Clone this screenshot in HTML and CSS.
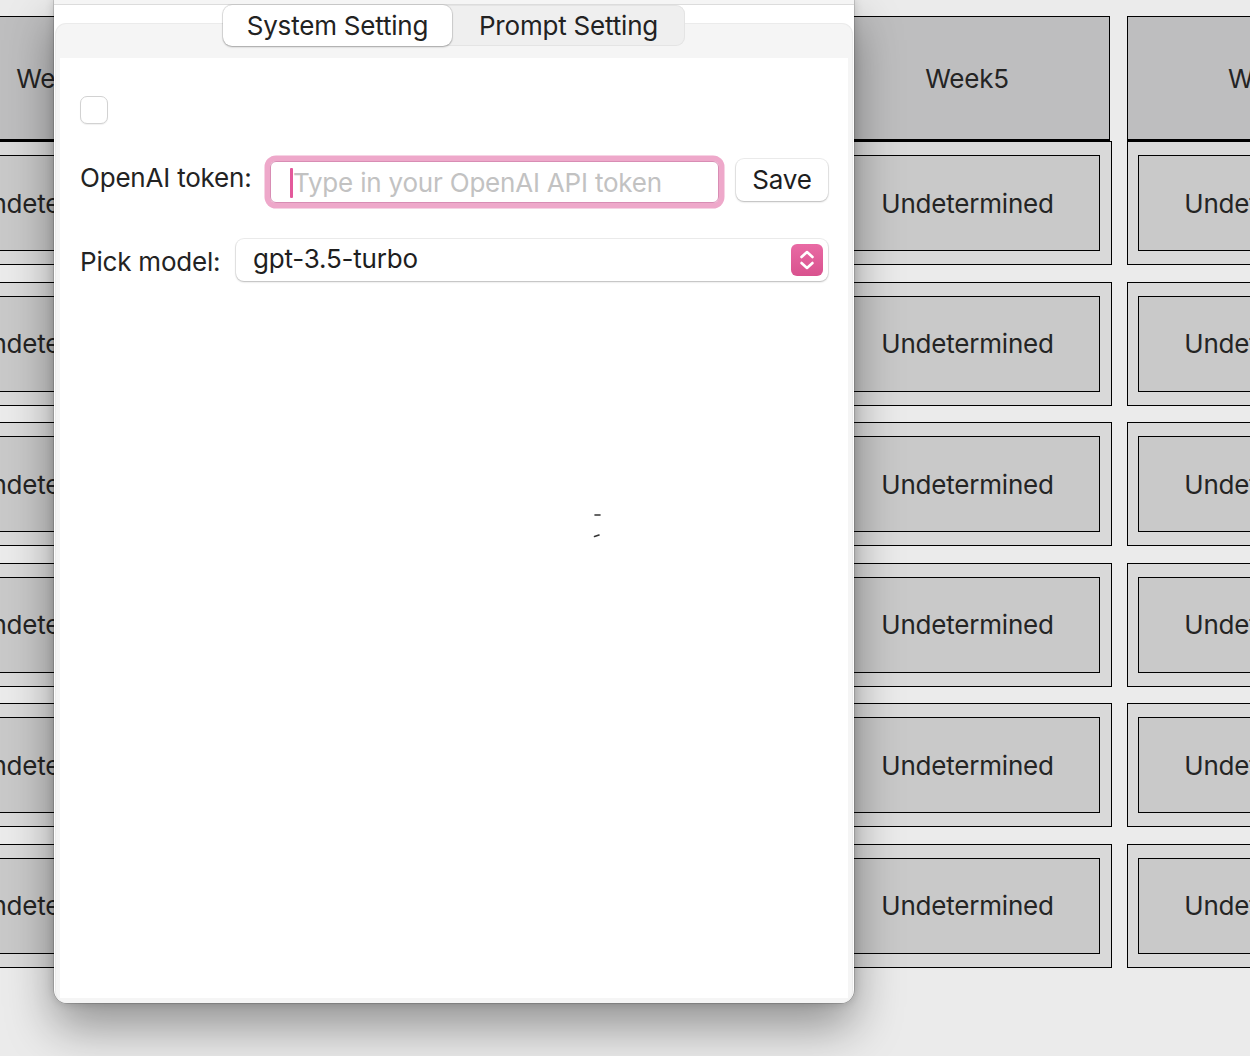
FILE: index.html
```html
<!DOCTYPE html>
<html>
<head>
<meta charset="utf-8">
<link rel="stylesheet" href="styles.css">
</head>
<body>
<div class="board">
  <div class="col">
    <div class="head">Week2</div>
    <div class="cell"><div class="inner">Undetermined</div></div>
    <div class="cell"><div class="inner">Undetermined</div></div>
    <div class="cell"><div class="inner">Undetermined</div></div>
    <div class="cell"><div class="inner">Undetermined</div></div>
    <div class="cell"><div class="inner">Undetermined</div></div>
    <div class="cell"><div class="inner">Undetermined</div></div>
  </div>
  <div class="col">
    <div class="head">Week3</div>
    <div class="cell"><div class="inner">Undetermined</div></div>
    <div class="cell"><div class="inner">Undetermined</div></div>
    <div class="cell"><div class="inner">Undetermined</div></div>
    <div class="cell"><div class="inner">Undetermined</div></div>
    <div class="cell"><div class="inner">Undetermined</div></div>
    <div class="cell"><div class="inner">Undetermined</div></div>
  </div>
  <div class="col">
    <div class="head">Week4</div>
    <div class="cell"><div class="inner">Undetermined</div></div>
    <div class="cell"><div class="inner">Undetermined</div></div>
    <div class="cell"><div class="inner">Undetermined</div></div>
    <div class="cell"><div class="inner">Undetermined</div></div>
    <div class="cell"><div class="inner">Undetermined</div></div>
    <div class="cell"><div class="inner">Undetermined</div></div>
  </div>
  <div class="col">
    <div class="head">Week5</div>
    <div class="cell"><div class="inner">Undetermined</div></div>
    <div class="cell"><div class="inner">Undetermined</div></div>
    <div class="cell"><div class="inner">Undetermined</div></div>
    <div class="cell"><div class="inner">Undetermined</div></div>
    <div class="cell"><div class="inner">Undetermined</div></div>
    <div class="cell"><div class="inner">Undetermined</div></div>
  </div>
  <div class="col">
    <div class="head">Week6</div>
    <div class="cell"><div class="inner">Undetermined</div></div>
    <div class="cell"><div class="inner">Undetermined</div></div>
    <div class="cell"><div class="inner">Undetermined</div></div>
    <div class="cell"><div class="inner">Undetermined</div></div>
    <div class="cell"><div class="inner">Undetermined</div></div>
    <div class="cell"><div class="inner">Undetermined</div></div>
  </div>
</div>

<div class="window">
  <div class="titlebar"></div>
  <div class="tabview">
    <div class="segmented">
      <div class="seg seg-active">System Setting</div>
      <div class="seg seg-second">Prompt Setting</div>
    </div>
    <div class="pane">
      <div class="checkbox"></div>
      <div class="row row-token">
        <span class="label label-token">OpenAI token:</span>
        <div class="field">
          <span class="caret"></span>
          <span class="placeholder">Type in your OpenAI API token</span>
        </div>
        <div class="button">Save</div>
      </div>
      <div class="row row-model">
        <span class="label label-model">Pick model:</span>
        <div class="select">
          <span class="select-value">gpt-3.5-turbo</span>
          <span class="stepper">
            <svg width="32" height="32" viewBox="0 0 32 32">
              <path d="M10.5 13 L16 8 L21.5 13" fill="none" stroke="#fff" stroke-width="2.6" stroke-linecap="round" stroke-linejoin="round"/>
              <path d="M10.5 19 L16 24 L21.5 19" fill="none" stroke="#fff" stroke-width="2.6" stroke-linecap="round" stroke-linejoin="round"/>
            </svg>
          </span>
        </div>
      </div>
      <div class="spinner">
        <svg width="12" height="30" viewBox="0 0 12 30">
          <path d="M3 4 L8 4" stroke="#333" stroke-width="1.6" stroke-linecap="round"/>
          <path d="M2.5 25.5 L7 24" stroke="#333" stroke-width="1.6" stroke-linecap="round"/>
        </svg>
      </div>
    </div>
  </div>
</div>
</body>
</html>
```

FILE: styles.css
```css
* { box-sizing: border-box; }
html, body {
  margin: 0;
  padding: 0;
  width: 1250px;
  height: 1056px;
  overflow: hidden;
}
body {
  background: #ebebeb;
  font-family: Inter, "Noto Sans", "Liberation Sans", sans-serif;
  color: #242424;
  position: relative;
}

/* Background board */
.board {
  display: flex;
  gap: 15px;
  margin-left: -85px;
  padding-top: 16px;
}
.col {
  width: 288px;
  flex: none;
  display: flex;
  flex-direction: column;
  gap: 16.6px;
}
.head {
  height: 125px;
  margin-bottom: -16.6px;
  background: #bebebf;
  border: 1px solid #000;
  border-bottom: 2px solid #000;
  display: flex;
  align-items: center;
  justify-content: center;
  font-size: 26px;
  letter-spacing: -0.2px;
  margin-right: 2px;
  white-space: nowrap;
}
.cell {
  height: 124px;
  background: #d9d9d9;
  border: 1px solid #000;
  padding: 13px 11px 13px 10px;
}
.inner {
  height: 100%;
  background: #c9c9c9;
  border: 1px solid #000;
  display: flex;
  align-items: center;
  justify-content: center;
  font-size: 26px;
  letter-spacing: -0.2px;
  white-space: nowrap;
}

/* Floating window */
.window {
  position: absolute;
  left: 54px;
  top: 0;
  width: 800px;
  height: 1003px;
  background: #fff;
  border-radius: 0 0 13px 13px;
  box-shadow: 0 24px 48px rgba(0,0,0,0.38), 0 0 10px rgba(0,0,0,0.18), 0 0 0 0.5px rgba(0,0,0,0.25);
  display: flex;
  flex-direction: column;
}
.titlebar {
  height: 5px;
  background: #f5f5f5;
  border-bottom: 1px solid #dcdcdc;
  flex: none;
}
.tabview {
  flex: 1;
  margin: 18px 1px 0 1px;
  background: #f5f5f5;
  border: 1px solid #ebebeb;
  border-bottom: none;
  border-radius: 11px 11px 12px 12px;
  display: flex;
  flex-direction: column;
  padding: 0 4px 5px 4px;
}
.segmented {
  align-self: center;
  margin: -19px 0 12px 0;
  height: 41px;
  display: flex;
  background: #efefef;
  border-radius: 9px;
  box-shadow: inset 0 0 0 1px #e4e4e4;
  font-size: 26px;
  letter-spacing: -0.2px;
  color: #222;
  white-space: nowrap;
}
.seg {
  display: flex;
  align-items: center;
  justify-content: center;
  height: 41px;
}
.seg-active {
  width: 229px;
  background: #fff;
  border-radius: 9px;
  box-shadow: 0 1px 2px rgba(0,0,0,0.28), 0 0 0 1px rgba(0,0,0,0.08);
}
.seg-second {
  width: 233px;
}

.pane {
  flex: 1;
  background: #fff;
  padding: 38px 20px 0 20px;
  display: flex;
  flex-direction: column;
}
.checkbox {
  width: 28px;
  height: 28px;
  border: 1px solid #d2d2d2;
  border-radius: 7px;
  background: #fff;
  box-shadow: 0 1px 1px rgba(0,0,0,0.06);
}
.row {
  display: flex;
  align-items: center;
  font-size: 26px;
  letter-spacing: -0.2px;
  white-space: nowrap;
}
.row-token {
  margin-top: 37px;
}
.row-model {
  margin-top: 36px;
}
.label {
  color: #232323;
  flex: none;
}
.label-token {
  width: 171px;
  margin-top: -9px;
}
.label-model {
  width: 139px;
  margin-top: 3px;
}
.field {
  flex: none;
  margin-left: 19px;
  width: 449px;
  height: 42px;
  border: 1px solid #d88db4;
  border-radius: 6px;
  box-shadow: 0 0 0 5.5px #eea8ca;
  display: flex;
  align-items: center;
  padding-left: 19px;
  color: #c2c2c2;
  overflow: hidden;
}
.caret {
  flex: none;
  width: 3px;
  height: 30px;
  background: #e3599b;
  border-radius: 1px;
  margin-top: 2px;
}
.placeholder {
  margin-top: 1px;
}
.button {
  flex: none;
  margin-left: 17px;
  width: 92px;
  height: 42px;
  background: #fff;
  border-radius: 8px;
  box-shadow: 0 1px 2px rgba(0,0,0,0.22), 0 0 0 1px rgba(0,0,0,0.07);
  display: flex;
  align-items: center;
  justify-content: center;
  color: #1e1e1e;
  margin-top: -5px;
}
.select {
  flex: none;
  margin-left: 17px;
  width: 592px;
  height: 42px;
  background: #fff;
  border-radius: 8px;
  box-shadow: 0 1px 2px rgba(0,0,0,0.22), 0 0 0 1px rgba(0,0,0,0.07);
  display: flex;
  align-items: center;
  justify-content: space-between;
  padding: 0 5px 0 17px;
  color: #1e1e1e;
}
.select-value {
  margin-top: -3px;
}
.stepper {
  width: 32px;
  height: 32px;
  border-radius: 6px;
  background: linear-gradient(#e96aa4, #d9528e);
  display: flex;
}
.spinner {
  margin-top: 230px;
  margin-left: 512px;
  width: 12px;
  height: 30px;
}
```
